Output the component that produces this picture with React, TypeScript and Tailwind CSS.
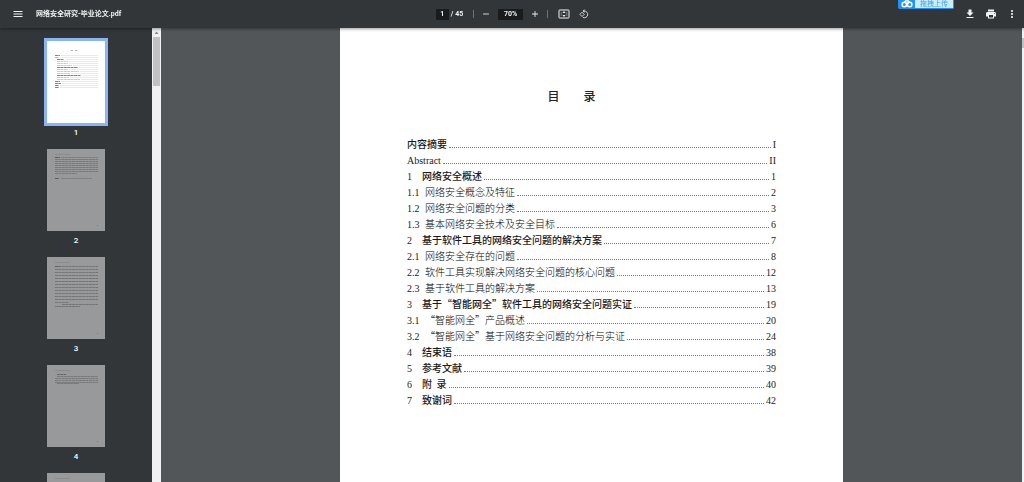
import React, { useState } from 'react';
import { MdMenu, MdAdd, MdRemove, MdFileDownload, MdPrint, MdMoreVert } from 'react-icons/md';

type Entry = {
    num?: string;
    title: string;
    page: string;
    kind: 'chapter' | 'section' | 'latin';
};

const entries: Entry[] = [
    { title: '内容摘要', page: 'I', kind: 'chapter' },
    { title: 'Abstract', page: 'II', kind: 'latin' },
    { num: '1', title: '网络安全概述', page: '1', kind: 'chapter' },
    { num: '1.1', title: '网络安全概念及特征', page: '2', kind: 'section' },
    { num: '1.2', title: '网络安全问题的分类', page: '3', kind: 'section' },
    { num: '1.3', title: '基本网络安全技术及安全目标', page: '6', kind: 'section' },
    { num: '2', title: '基于软件工具的网络安全问题的解决方案', page: '7', kind: 'chapter' },
    { num: '2.1', title: '网络安全存在的问题', page: '8', kind: 'section' },
    { num: '2.2', title: '软件工具实现解决网络安全问题的核心问题', page: '12', kind: 'section' },
    { num: '2.3', title: '基于软件工具的解决方案', page: '13', kind: 'section' },
    { num: '3', title: '基于“智能网全”软件工具的网络安全问题实证', page: '19', kind: 'chapter' },
    { num: '3.1', title: '“智能网全”产品概述', page: '20', kind: 'section' },
    { num: '3.2', title: '“智能网全”基于网络安全问题的分析与实证', page: '24', kind: 'section' },
    { num: '4', title: '结束语', page: '38', kind: 'chapter' },
    { num: '5', title: '参考文献', page: '39', kind: 'chapter' },
    { num: '6', title: '附  录', page: '40', kind: 'chapter' },
    { num: '7', title: '致谢词', page: '42', kind: 'chapter' },
];

const titleStyles = {
    chapter: 'font-medium text-[#1a1a1a]',
    section: 'font-light text-black',
    latin: "font-['Liberation_Serif',serif] text-[#222]",
};

// a run of tiny text inside a thumbnail: x, y, width, opacity
type Run = [number, number, number, number];

const body = (top: number, count: number, step: number, opacity: number): Run[] =>
    Array.from({ length: count }, (_, i): Run => [8, top + i * step, 43, opacity]);

const thumbs: { page: number; runs: Run[] }[] = [
    {
        page: 1,
        runs: [
            [24, 9, 2, 0.4], [28, 9, 2, 0.4],
            [8, 14, 5, 0.6], [8, 16, 4, 0.35], [10, 18, 7, 0.6], [10, 20, 11, 0.25],
            [10, 22, 11, 0.25], [10, 24, 15, 0.25], [10, 26, 21, 0.6], [10, 28, 11, 0.25],
            [10, 30, 22, 0.25], [10, 32, 13, 0.25], [10, 34, 24, 0.6], [10, 36, 12, 0.25],
            [10, 38, 23, 0.25], [8, 40, 5, 0.6], [8, 42, 6, 0.6], [8, 44, 4, 0.6], [8, 46, 4, 0.6],
        ],
    },
    {
        page: 2,
        runs: [[8, 5, 15, 0.15], [8, 8, 5, 0.6], [14, 8, 37, 0.25], ...body(10, 7, 2, 0.3), [8, 24, 22, 0.3], [8, 29, 4, 0.6], [14, 29, 31, 0.25], [50, 76, 1, 0.3]],
    },
    {
        page: 3,
        runs: [[8, 5, 15, 0.15], [8, 9, 5, 0.3], ...body(9, 12, 3, 0.35), [8, 45, 14, 0.3], [15, 47, 36, 0.35], [8, 49, 25, 0.35], [50, 76, 1, 0.3]],
    },
    {
        page: 4,
        runs: [[8, 5, 15, 0.15], [10, 9, 9, 0.5], [10, 11, 41, 0.3], ...body(13, 3, 2, 0.3), [10, 18, 22, 0.3], [50, 76, 1, 0.3]],
    },
    { page: 5, runs: [[8, 5, 15, 0.15], ...body(9, 13, 3, 0.35)] },
];

const FitPageIcon = () => (
    <svg viewBox="0 0 24 24" className="size-3" fill="none" stroke="currentColor" strokeWidth="2">
        <rect x="2" y="4" width="20" height="16" rx="1" />
        <path d="M12 6l3 4H9zM12 18l3-4H9z" fill="currentColor" stroke="none" />
        <path d="M6.500 8v8M17.500 8v8" strokeOpacity="0.4" />
    </svg>
);

const RotateIcon = () => (
    <svg viewBox="0 0 24 24" className="size-2.5" fill="none" stroke="currentColor" strokeWidth="2">
        <path d="M7.300 7.800l5.100 5.100-5.100 5.100-5.100-5.100z" />
        <path d="M12.500 5a8 8 0 1 1-3 15.200" />
        <path d="M13 0.800v8.400L8.800 5z" fill="currentColor" stroke="none" />
    </svg>
);

const CloudLogo = () => (
    <svg viewBox="0 0 16 10" className="h-2 w-3" fill="none" stroke="white" strokeWidth="2">
        <circle cx="4.5" cy="5.8" r="3" />
        <circle cx="11.5" cy="5.8" r="3" />
        <path d="M4.500 3C5.500 0 10.500 0 11 3M6.500 8L9.500 4" />
    </svg>
);

const IconButton = ({ label, children }: { label: string; children: React.ReactNode }) => (
    <button type="button" aria-label={label} className="flex size-4 items-center justify-center rounded-full hover:bg-white/10">
        {children}
    </button>
);

const Thumbnail = ({ page, runs, active, onSelect }: { page: number; runs: Run[]; active: boolean; onSelect: () => void }) => (
    <button type="button" onClick={onSelect} className="flex shrink-0 flex-col items-center">
        <span className={active ? 'bg-white ring-3 ring-[#8ab4f8]' : 'bg-[#98999b]'}>
            <svg viewBox="0 0 58 82" className="h-[82px] w-[58px]">
                {runs.map(([x, y, width, opacity], i) => (
                    <line key={i} x1={x} x2={x + width} y1={y + 0.5} y2={y + 0.5} stroke="#333" strokeOpacity={opacity} strokeDasharray="3 0.4" />
                ))}
                {active && runs.slice(2).map(([x, y, width], i) => (
                    <line key={i} x1={x + width + 1} x2={51} y1={y + 0.5} y2={y + 0.5} stroke="#333" strokeOpacity={0.1} />
                ))}
            </svg>
        </span>
        <span className="pt-1 text-[8px] leading-3 font-medium text-white">{page}</span>
    </button>
);

const Toolbar = () => (
    <header className="relative z-10 grid h-7 shrink-0 grid-cols-[1fr_auto_1fr] items-center bg-[#323639] text-[7px] font-bold text-[#f1f1f1] shadow-[0_1px_3px_rgba(0,0,0,0.4)]">
        <div className="flex items-center gap-2.5 pl-2.5">
            <IconButton label="菜单"><MdMenu className="size-3" /></IconButton>
            <h1 className="font-['Roboto','Noto_Sans_CJK_SC',sans-serif]">网络安全研究-毕业论文.pdf</h1>
        </div>

        <div className="flex items-center pl-1">
            <input aria-label="页码" defaultValue="1" className="h-[11px] w-[13px] bg-[#191b1c] text-center" />
            <span className="pl-0.5">/ 45</span>
            <span className="mx-1 ml-2.5 h-2 w-px bg-white/30" />
            <IconButton label="缩小"><MdRemove className="size-2.5" /></IconButton>
            <input aria-label="缩放" defaultValue="70%" className="mx-1 h-[11px] w-[25px] bg-[#191b1c] text-center" />
            <IconButton label="放大"><MdAdd className="size-2.5" /></IconButton>
            <span className="mx-1 h-2 w-px bg-white/30" />
            <div className="flex gap-1 pl-1">
                <IconButton label="适合页面大小"><FitPageIcon /></IconButton>
                <IconButton label="逆时针旋转"><RotateIcon /></IconButton>
            </div>
        </div>

        <div className="flex items-center justify-end gap-[5px] pr-1">
            <IconButton label="下载"><MdFileDownload className="size-3" /></IconButton>
            <IconButton label="打印"><MdPrint className="size-3" /></IconButton>
            <IconButton label="更多"><MdMoreVert className="size-3" /></IconButton>
        </div>

        <button type="button" className="absolute top-0 right-[70px] flex h-[9px] w-14 items-start rounded-b-xs border border-t-0 border-[#1e90f0] bg-[#c9ecff]">
            <span className="flex h-full w-4 items-center justify-center bg-[#1e96f5]"><CloudLogo /></span>
            <span className="flex-1 font-['Noto_Sans_CJK_SC',sans-serif] text-[7px] leading-[7px] font-normal text-[#3d9ff0]">拖拽上传</span>
        </button>
    </header>
);

const TocRow = ({ num, title, page, kind }: Entry) => (
    <li className="flex h-4 items-baseline leading-4">
        {num && <span className={kind === 'section' ? 'w-[18px]' : 'w-[15px]'}>{num}</span>}
        <a href={`#page-${page}`} className="font-['Noto_Sans_CJK_SC',sans-serif] whitespace-pre">
            <span className={titleStyles[kind]}>{title}</span>
        </a>
        <span className="mx-0.5 flex-1 border-b border-dotted border-[#777]" />
        <span>{page}</span>
    </li>
);

const App = () => {
    const [current, setCurrent] = useState(1);

    return (
        <div className="flex h-screen flex-col overflow-hidden bg-[#525659] font-['Roboto',sans-serif]">
            <Toolbar />

            <div className="flex min-h-0 flex-1">
                <nav aria-label="缩略图" className="flex w-[152px] shrink-0 flex-col items-center gap-2.5 overflow-y-auto bg-[#323639] pt-[13px] [scrollbar-width:none]">
                    {thumbs.map((t) => (
                        <Thumbnail key={t.page} {...t} active={t.page === current} onSelect={() => setCurrent(t.page)} />
                    ))}
                </nav>
                <div className="flex w-[9px] shrink-0 flex-col items-center bg-[#f1f1f1]">
                    <svg viewBox="0 0 9 9" className="size-[9px]"><path d="M2.500 6L4.500 3.500 6.500 6z" fill="#888" /></svg>
                    <div className="h-[49px] w-[7px] bg-[#c1c1c1]" />
                </div>

                <main className="flex min-w-0 flex-1 justify-center overflow-hidden">
                    <article className="w-[503px] bg-white px-[67px] pt-[60px] font-['Liberation_Serif','Noto_Sans_CJK_SC',serif] text-[10px] text-[#222]">
                        <h2 className="pr-10 text-center font-['Noto_Sans_CJK_SC',sans-serif] text-xs leading-4 font-medium whitespace-pre">目　　录</h2>
                        <ol className="pt-8">
                            {entries.map((e) => <TocRow key={e.title} {...e} />)}
                        </ol>
                    </article>
                </main>
                <div className="w-0.5 shrink-0 bg-[#f1f1f1] pt-2.5">
                    <div className="h-2.5 bg-[#c1c1c1]" />
                </div>
            </div>
        </div>
    );
};

export default App;
